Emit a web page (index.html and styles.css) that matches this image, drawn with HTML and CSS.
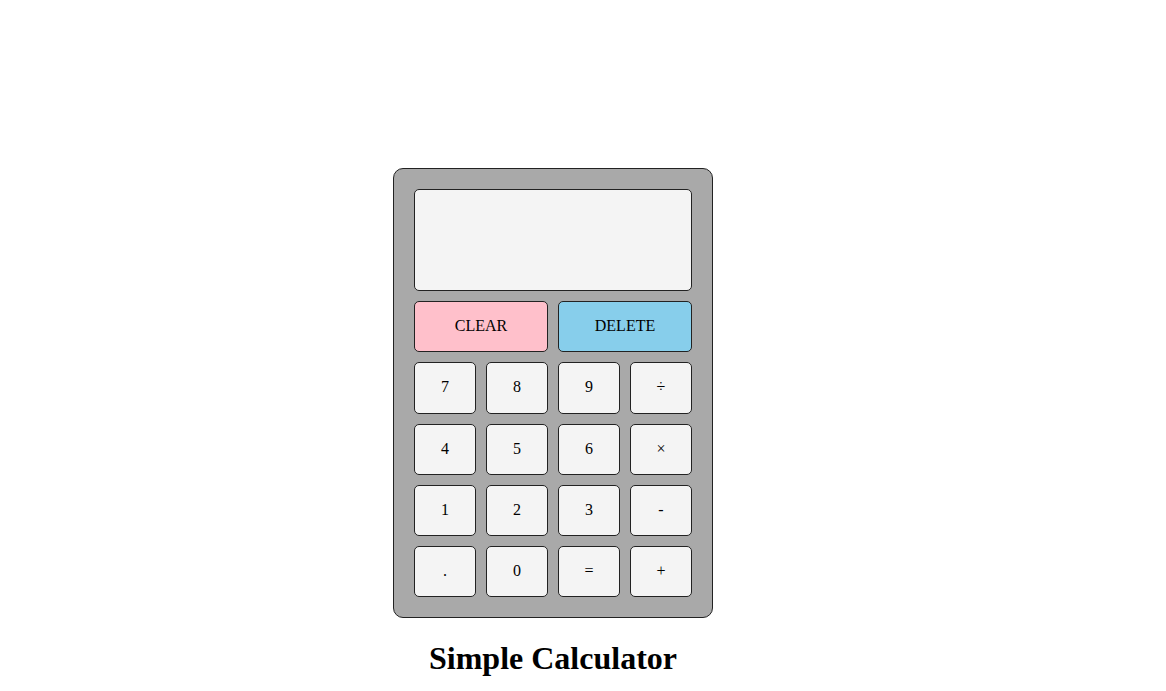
FILE: index.html
```html
<!DOCTYPE html>
<html>
<head>
<meta charset="utf-8">
<title>Simple Calculator</title>
<link rel="stylesheet" href="styles.css">
</head>
<body>
<div class="page">
  <div class="calculator">
    <div class="display"></div>
    <button class="key key-clear">CLEAR</button>
    <button class="key key-delete">DELETE</button>
    <button class="key">7</button>
    <button class="key">8</button>
    <button class="key">9</button>
    <button class="key">÷</button>
    <button class="key">4</button>
    <button class="key">5</button>
    <button class="key">6</button>
    <button class="key">×</button>
    <button class="key">1</button>
    <button class="key">2</button>
    <button class="key">3</button>
    <button class="key">-</button>
    <button class="key">.</button>
    <button class="key">0</button>
    <button class="key">=</button>
    <button class="key">+</button>
  </div>
  <h1 class="title">Simple Calculator</h1>
</div>
</body>
</html>
```

FILE: styles.css
```css
html, body {
  margin: 0;
  padding: 0;
  background: #ffffff;
}

body {
  font-family: "Liberation Serif", "Times New Roman", serif;
  color: #000;
}

.page {
  display: flex;
  flex-direction: column;
  align-items: center;
  padding-top: 168px;
  padding-right: 60px;
}

.calculator {
  display: grid;
  grid-template-columns: repeat(4, 62px);
  grid-template-rows: 102px repeat(5, 51.25px);
  gap: 10px;
  padding: 20px;
  background: #a9a9a9;
  border: 1px solid #222;
  border-radius: 10px;
}

.display {
  grid-column: 1 / span 4;
  background: #f4f4f4;
  border: 1px solid #222;
  border-radius: 5px;
  box-sizing: border-box;
}

.key {
  box-sizing: border-box;
  margin: 0;
  padding: 0 0 1px 0;
  font-family: "Liberation Serif", "Times New Roman", serif;
  font-size: 16px;
  color: #000;
  background: #f4f4f4;
  border: 1px solid #222;
  border-radius: 5px;
}

.key-clear {
  grid-column: 1 / span 2;
  background: #ffc0cb;
}

.key-delete {
  grid-column: 3 / span 2;
  background: #87ceeb;
}

.title {
  margin: 21.44px 0;
  font-size: 32px;
  font-weight: bold;
  text-align: center;
}
```
